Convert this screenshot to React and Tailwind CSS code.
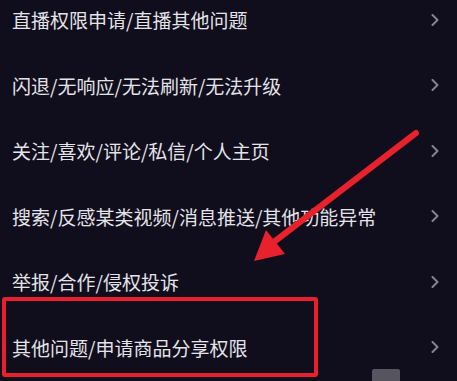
import React from "react";

const items = [
  "直播权限申请/直播其他问题",
  "闪退/无响应/无法刷新/无法升级",
  "关注/喜欢/评论/私信/个人主页",
  "搜索/反感某类视频/消息推送/其他功能异常",
  "举报/合作/侵权投诉",
  "其他问题/申请商品分享权限",
];

function Chevron() {
  return (
    <svg width="8" height="12" viewBox="0 0 8 12" fill="none">
      <polyline points="1.5,1 6.5,6 1.5,11" stroke="#85848e" strokeWidth="2" strokeLinecap="round" strokeLinejoin="round" />
    </svg>
  );
}

export default function App() {
  return (
    <div
      className="relative w-[457px] h-[381px] overflow-hidden bg-[#100e1d] text-[#e4e3e8]"
      style={{ fontFamily: '"Noto Sans CJK SC", "Noto Sans", sans-serif' }}
    >
      <div className="-mt-[13px] flex flex-col">
        {items.map((text, i) => (
          <div key={i} className="h-[65.5px] flex items-center justify-between pl-[12px] pr-[18px]">
            <span className="text-[19px] leading-none">{text}</span>
            <Chevron />
          </div>
        ))}
      </div>

      {/* highlight box */}
      <div className="absolute left-[2px] top-[297px] w-[316px] h-[80px] border-[4px] border-[#ea1f2d] rounded-[3px]" />

      {/* arrow */}
      <svg className="absolute left-0 top-0" width="457" height="381" viewBox="0 0 457 381">
        <line x1="416" y1="133" x2="266" y2="248" stroke="#e8222c" strokeWidth="6" strokeLinecap="round" />
        <polygon points="254,261 266,230 285,254" fill="#e8222c" />
      </svg>

      {/* bottom scrollbar remnant */}
      <div className="absolute left-[372px] top-[369px] w-[28px] h-[12px] bg-[#56555f] rounded-t-[2px]" />
    </div>
  );
}
